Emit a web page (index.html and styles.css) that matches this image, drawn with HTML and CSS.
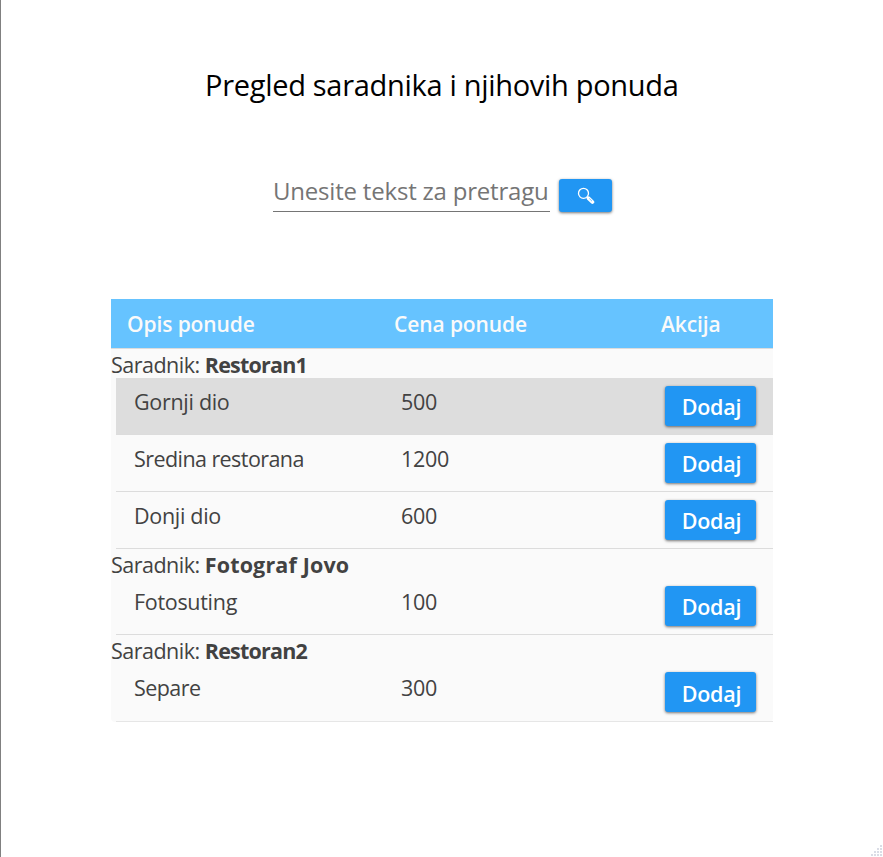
FILE: index.html
```html
<!DOCTYPE html>
<html lang="sr">
<head>
<meta charset="utf-8">
<title>Pregled saradnika</title>
<link rel="stylesheet" href="styles.css">
</head>
<body>
<main class="window">
  <h1><span>Pregled saradnika i njihovih ponuda</span></h1>
  <form class="search">
    <div class="search-field"><span>Unesite tekst za pretragu</span></div>
    <button type="button" class="search-button" aria-label="Pretraga">
      <svg width="18" height="18" viewBox="0 0 18 18" fill="none" stroke="currentColor">
        <circle cx="6.5" cy="6.3" r="5" stroke-width="1.3"/>
        <path d="M10.2 10 11.5 11.3" stroke-width="1.4"/>
        <path d="M11.6 11.3 15.4 15" stroke-width="3.8" stroke-linecap="round"/>
        <path d="M12.2 11.4 15 14.2" stroke="#2196f3" stroke-width=".6"/>
      </svg>
    </button>
  </form>
  <section class="table">
    <div class="head"><span>Opis ponude</span><span>Cena ponude</span><span>Akcija</span></div>
    <div class="group">Saradnik: <b>Restoran1</b></div>
    <div class="row selected"><span>Gornji dio</span><span>500</span><button type="button">Dodaj</button></div>
    <div class="row"><span class="tight">Sredina restorana</span><span>1200</span><button type="button">Dodaj</button></div>
    <div class="row"><span>Donji dio</span><span>600</span><button type="button">Dodaj</button></div>
    <div class="group">Saradnik: <b class="wide">Fotograf Jovo</b></div>
    <div class="row"><span>Fotosuting</span><span>100</span><button type="button">Dodaj</button></div>
    <div class="group">Saradnik: <b>Restoran2</b></div>
    <div class="row last"><span class="tight">Separe</span><span>300</span><button type="button">Dodaj</button></div>
  </section>
  <svg class="grip" width="12" height="12" viewBox="0 0 12 12" fill="#dadde6">
    <path d="M9 0h2v2H9zM6 3h2v2H6zM9 3h2v2H9zM3 6h2v2H3zM6 6h2v2H6zM9 6h2v2H9zM0 9h2v2H0zM3 9h2v2H3zM6 9h2v2H6zM9 9h2v2H9z"/>
  </svg>
</main>
</body>
</html>
```
FILE: styles.css
```css
* { box-sizing: border-box; }
body {
  margin: 0;
  background: #fff;
  color: #424242;
  font-family: "Open Sans", "Noto Sans", sans-serif;
}
.window {
  position: relative;
  height: 857px;
  padding: 63px 110px 0;
  border-left: 1px solid #808080;
  overflow: hidden;
}
h1 {
  margin: 0;
  height: 44px;
  padding-left: 94px;
  color: #000;
  font-size: 29px;
  font-weight: 400;
  line-height: 44px;
  letter-spacing: -.3px;
  white-space: nowrap;
}
.search {
  display: flex;
  margin: 63px 0 0 162px;
  height: 43px;
}
.search-field {
  width: 277px;
  height: 42px;
  border-bottom: 1px solid #757575;
  color: #757575;
  font-size: 24px;
  line-height: 42px;
  letter-spacing: -.2px;
  white-space: nowrap;
}
button {
  padding: 0;
  border: 0;
  border-radius: 3px;
  background: #2196f3;
  color: #fff;
  font-family: inherit;
  box-shadow: 0 1px 3px rgba(0, 0, 0, .55);
}
.search-button {
  display: flex;
  justify-content: center;
  align-items: center;
  width: 53px;
  height: 33px;
  margin: 9px 0 0 9px;
}
.table {
  width: 662px;
  margin-top: 86px;
  background: #fafafa;
  border-radius: 0 0 4px 4px;
  font-size: 21.5px;
  letter-spacing: -.3px;
}
.head {
  display: grid;
  grid-template-columns: 267px 267px 1fr;
  height: 50px;
  padding-left: 16px;
  border-bottom: 1px solid #dcdcdc;
  background: #66c3ff;
  color: #fafafa;
  font-size: 21px;
  font-weight: 600;
  line-height: 50px;
  letter-spacing: -.1px;
}
.group {
  height: 29px;
  line-height: 31px;
  letter-spacing: -.5px;
  white-space: nowrap;
}
.group b { letter-spacing: -.8px; }
.group b.wide { letter-spacing: .15px; }
.row {
  display: grid;
  grid-template-columns: 267px 264px 91px;
  align-items: start;
  height: 57px;
  margin-left: 5px;
  padding-left: 18px;
  border-bottom: 1px solid #dcdcdc;
  line-height: 47px;
}
.row .tight { letter-spacing: -.57px; }
.row.selected { background: #ddd; }
.row button {
  height: 40px;
  margin-top: 8px;
  padding-left: 2px;
  font-size: 21.5px;
  font-weight: 600;
  line-height: 42px;
  letter-spacing: -.2px;
}
.row.last {
  height: 58px;
  border-color: #e6e6e6;
}
.row.last button { line-height: 44px; }
.grip {
  position: absolute;
  right: 0;
  bottom: 0;
}
```
